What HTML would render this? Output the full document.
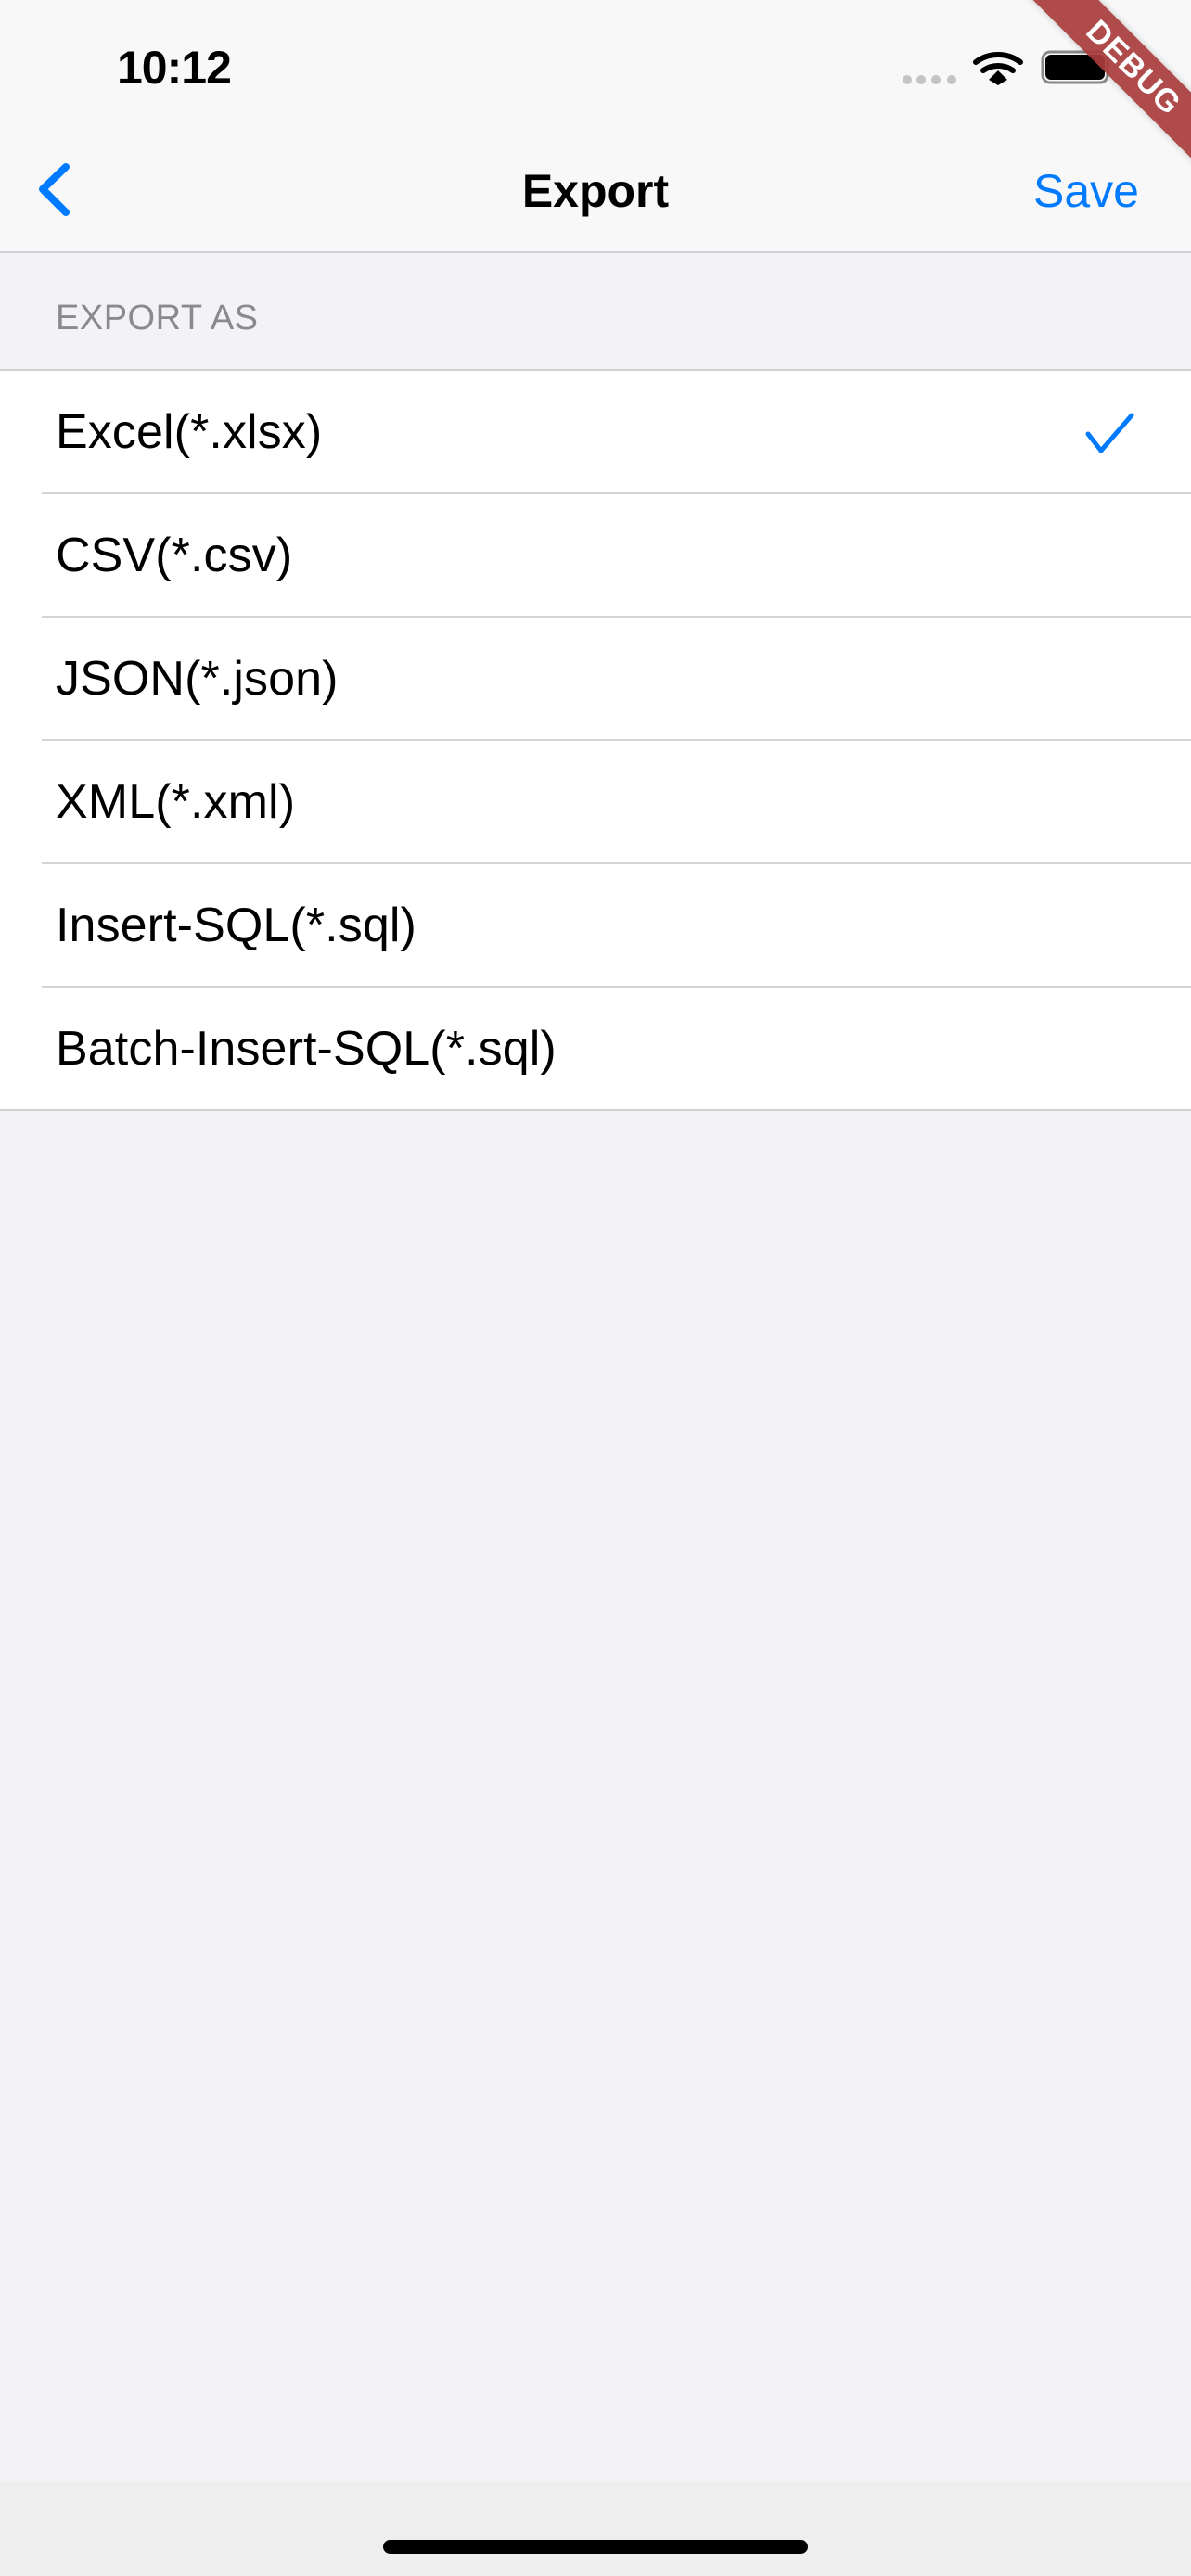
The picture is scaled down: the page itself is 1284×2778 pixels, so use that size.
<!DOCTYPE html>
<html><head><meta charset="utf-8"><style>
*{margin:0;padding:0;box-sizing:border-box}
html,body{width:1284px;height:2778px;overflow:hidden;background:#f2f2f7;font-family:"Liberation Sans",sans-serif;position:relative}
.abs{position:absolute}
.nav{left:0;top:0;width:1284px;height:273px;background:#f8f8f8;border-bottom:2px solid #d0d0d4}
.row{position:absolute;left:0;width:1284px;height:133px;background:#fff}
.row span{position:absolute;left:60px;top:0;line-height:133px;font-size:52px;letter-spacing:0.1px;color:#000}
.sep{position:absolute;left:45px;right:0;bottom:0;height:2px;background:#d4d4d8}
</style></head><body>
<div class="abs nav"></div>
<div class="abs" style="left:126px;top:44px;font-size:50px;font-weight:bold;line-height:58px;letter-spacing:-1px">10:12</div>
<svg class="abs" style="left:960px;top:50px" width="250" height="50">
<circle cx="18" cy="36" r="5" fill="#c4c4c4"/><circle cx="33" cy="36" r="5" fill="#c4c4c4"/><circle cx="49" cy="36" r="5" fill="#c4c4c4"/><circle cx="66" cy="36" r="5" fill="#c4c4c4"/>
<path d="M92 17 A40 40 0 0 1 140 17" stroke="#000" stroke-width="6" fill="none" stroke-linecap="round"/>
<path d="M100 26 A28 28 0 0 1 132 26" stroke="#000" stroke-width="6" fill="none" stroke-linecap="round"/>
<path d="M106 36 L116 26 L126 36 L116 42 Z" fill="#000"/>
<rect x="164" y="6" width="70" height="33" rx="8" fill="none" stroke="#888" stroke-width="3"/>
<rect x="167" y="9" width="64" height="27" rx="6" fill="#000"/>
</svg>
<div class="abs" style="left:1022px;top:48px;width:400px;height:50px;background:rgba(168,60,60,0.92);transform:rotate(45deg);color:#fff;font-weight:bold;font-size:34px;text-align:center;line-height:50px;letter-spacing:1px;box-shadow:0 0 8px rgba(0,0,0,0.2)">DEBUG</div>
<svg class="abs" style="left:0;top:160px" width="120" height="100"><path d="M71 20 L46 44 L71 69" stroke="#007aff" stroke-width="8" fill="none" stroke-linecap="round" stroke-linejoin="round"/></svg>
<div class="abs" style="left:0;width:1284px;top:176px;text-align:center;font-size:50px;font-weight:bold;line-height:60px">Export</div>
<div class="abs" style="left:1114px;top:176px;font-size:50px;color:#007aff;line-height:60px">Save</div>
<div class="abs" style="left:60px;top:320px;font-size:38px;color:#8a8a8e;line-height:46px;letter-spacing:0.5px">EXPORT AS</div>
<div class="abs" style="left:0;top:398px;width:1284px;height:2px;background:#d0d0d4"></div>
<div class="row" style="top:400px"><span>Excel(*.xlsx)</span><div class="sep"></div>
<svg class="abs" style="left:1168px;top:44px" width="60" height="50"><path d="M5 24 L19 42 L52 4" stroke="#007aff" stroke-width="5" fill="none" stroke-linecap="round" stroke-linejoin="round"/></svg></div>
<div class="row" style="top:533px"><span>CSV(*.csv)</span><div class="sep"></div></div>
<div class="row" style="top:666px"><span>JSON(*.json)</span><div class="sep"></div></div>
<div class="row" style="top:799px"><span>XML(*.xml)</span><div class="sep"></div></div>
<div class="row" style="top:932px"><span>Insert-SQL(*.sql)</span><div class="sep"></div></div>
<div class="row" style="top:1065px;height:132px"><span style="line-height:132px">Batch-Insert-SQL(*.sql)</span></div>
<div class="abs" style="left:0;top:1196px;width:1284px;height:2px;background:#d0d0d4"></div>
<div class="abs" style="left:0;top:2676px;width:1284px;height:102px;background:#eeeeee"></div>
<div class="abs" style="left:413px;top:2739px;width:458px;height:15px;border-radius:8px;background:#000"></div>
</body></html>
